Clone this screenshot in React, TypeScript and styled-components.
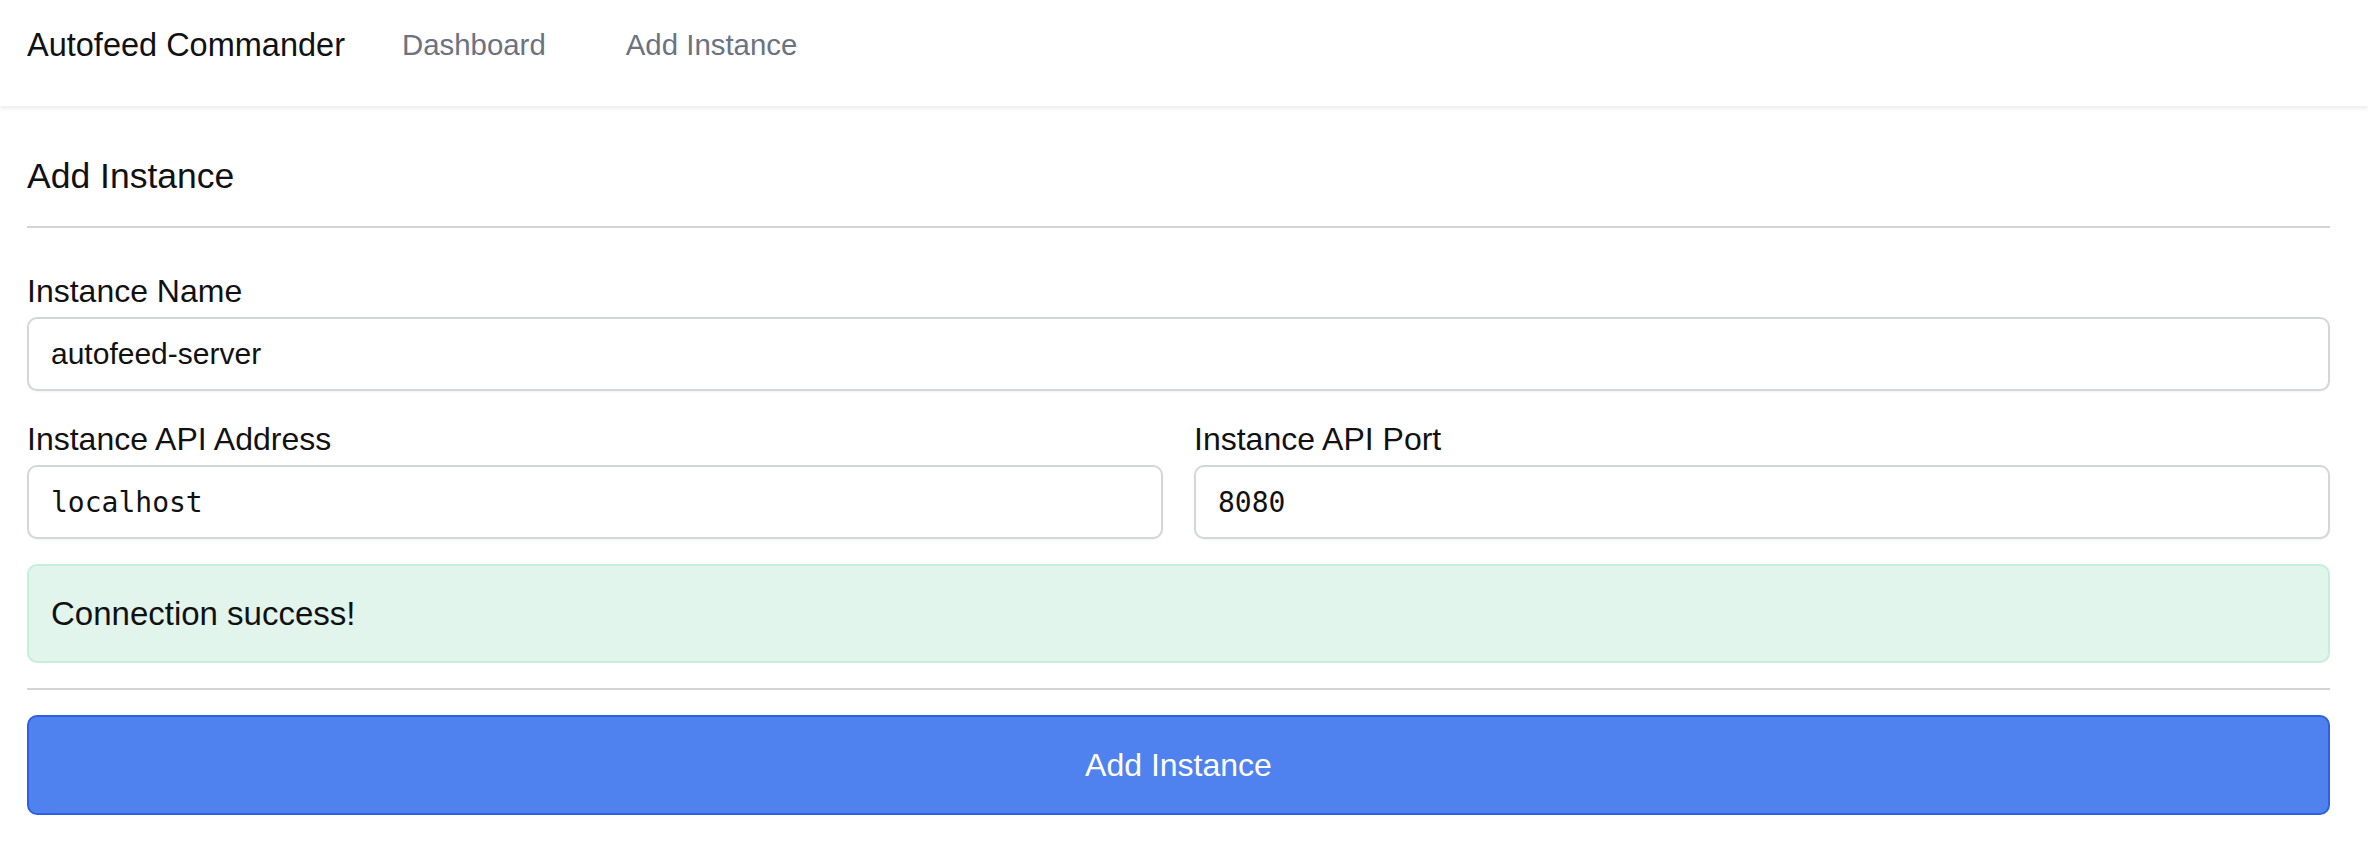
import styled, { createGlobalStyle } from 'styled-components';

const GlobalStyle = createGlobalStyle`
  html, body {
    margin: 0;
    padding: 0;
    background: #ffffff;
  }
  body {
    font-family: 'Liberation Sans', Arial, sans-serif;
    color: #111111;
  }
  * {
    box-sizing: border-box;
  }
`;

const App = () => {
  return (
    <>
      <GlobalStyle />
      <NavBar>
        <Brand>Autofeed Commander</Brand>
        <NavLink>Dashboard</NavLink>
        <NavLink>Add Instance</NavLink>
      </NavBar>

      <Main>
        <Title>Add Instance</Title>
        <Divider />

        <Form>
          <Field>
            <Label>Instance Name</Label>
            <Input defaultValue="autofeed-server" />
          </Field>

          <FieldRow>
            <Field>
              <Label>Instance API Address</Label>
              <Input mono defaultValue="localhost" />
            </Field>
            <Field>
              <Label>Instance API Port</Label>
              <Input mono defaultValue="8080" />
            </Field>
          </FieldRow>
        </Form>

        <Alert>Connection success!</Alert>
        <Divider className="bottom" />
        <SubmitButton type="button">Add Instance</SubmitButton>
      </Main>
    </>
  );
};

export default App;

const NavBar = styled.header`
  height: 106px;
  display: flex;
  align-items: flex-start;
  padding: 27px 38px 0 27px;
  background-color: #ffffff;
  box-shadow: 0 2px 5px rgba(0, 0, 0, 0.09);
  position: relative;
`;

const Brand = styled.div`
  font-size: 32.5px;
  line-height: 36px;
  color: #111111;
  margin-right: 17px;
`;

const NavLink = styled.a`
  font-size: 29.4px;
  line-height: 36px;
  color: #6b7280;
  padding: 0 40px;
  cursor: pointer;
`;

const Main = styled.main`
  padding: 50px 38px 40px 27px;
`;

const Title = styled.h1`
  margin: 0;
  font-size: 35.5px;
  font-weight: 400;
  line-height: 40px;
  color: #111111;
`;

const Divider = styled.hr`
  border: none;
  height: 2px;
  background-color: #d4d4d8;
  margin: 30px 0 45px;

  &.bottom {
    margin: 25px 0 25px;
  }
`;

const Form = styled.div`
  display: flex;
  flex-direction: column;
  gap: 30px;
`;

const FieldRow = styled.div`
  display: grid;
  grid-template-columns: 1fr 1fr;
  gap: 31px;
`;

const Field = styled.label`
  display: flex;
  flex-direction: column;
  gap: 8px;
`;

const Label = styled.span`
  font-size: 32px;
  line-height: 36px;
  color: #111111;
`;

const Input = styled.input<{ mono?: boolean }>`
  height: 74px;
  width: 100%;
  padding: 0 22px;
  border: 2px solid #d4d6db;
  border-radius: 10px;
  box-shadow: 0 1px 2px rgba(0, 0, 0, 0.05);
  background: #ffffff;
  color: #111111;
  font-family: ${({ mono }) =>
    mono ? "'DejaVu Sans Mono', 'Liberation Mono', monospace" : "'Liberation Sans', Arial, sans-serif"};
  font-size: ${({ mono }) => (mono ? '28px' : '30px')};
  outline: none;
`;

const Alert = styled.div`
  margin-top: 25px;
  height: 99px;
  display: flex;
  align-items: center;
  padding: 0 22px;
  background-color: #e1f5ec;
  border: 2px solid #c5eedb;
  border-radius: 10px;
  font-size: 33px;
  color: #111111;
`;

const SubmitButton = styled.button`
  display: block;
  width: 100%;
  height: 100px;
  background-color: #4f82ef;
  border: 2px solid #2f5fe3;
  border-radius: 10px;
  color: #ffffff;
  font-family: 'Liberation Sans', Arial, sans-serif;
  font-size: 32px;
  cursor: pointer;
`;
